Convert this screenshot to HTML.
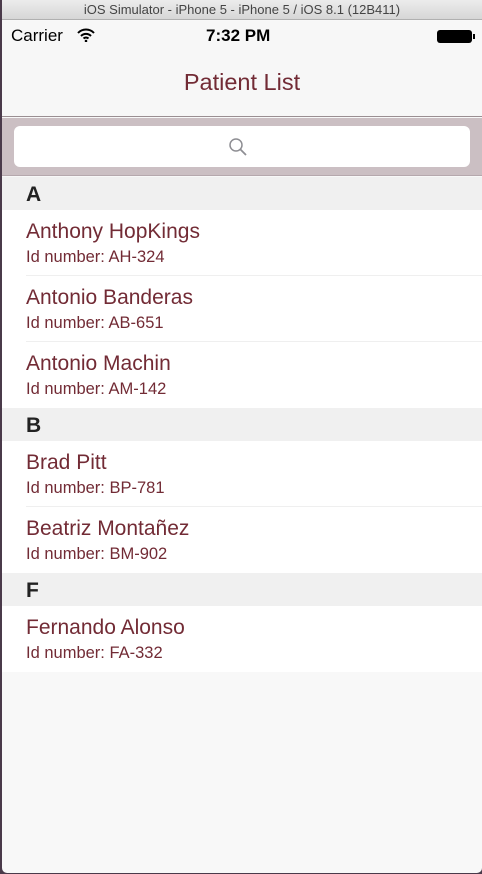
<!DOCTYPE html>
<html><head><style>
*{margin:0;padding:0;box-sizing:border-box}
body{width:482px;height:874px;background:#4a3a4a;position:relative;overflow:hidden;font-family:"Liberation Sans",sans-serif}
.win{position:absolute;left:2px;top:0;width:480px;height:873px;background:#f8f8f8;border-radius:0 0 5px 5px;overflow:hidden}
.tb{height:20px;background:linear-gradient(#ececec,#d6d6d6);border-bottom:1px solid #b0b0b0;text-align:center;font-size:13px;color:#444;line-height:20px}
.sb{position:absolute;top:21px;left:0;width:480px;height:30px;font-size:17px;color:#000}
.nav{position:absolute;top:21px;left:0;width:480px;height:96px;background:#f7f7f7;border-bottom:1px solid #9a8e92}
.title{position:absolute;top:69px;width:480px;text-align:center;font-size:23.5px;color:#722b35}
.search{position:absolute;top:118px;left:0;width:480px;height:58px;background:#cbbfc3;border-bottom:1px solid #b5a8ad}
.field{position:absolute;left:12px;top:8px;width:456px;height:41px;background:#fff;border-radius:6px}
.list{position:absolute;top:177px;left:0;width:480px}
.sec{height:33px;background:#f0f0f0;font-size:21px;font-weight:bold;color:#222;padding-left:24px;line-height:36px}
.row{height:66px;background:#fff;position:relative;color:#722b35}
.row .n{position:absolute;left:24px;top:10px;font-size:21px}
.row .i{position:absolute;left:24px;top:38px;font-size:16.5px}
.row.l::after{content:"";position:absolute;left:24px;right:0;bottom:0;height:1px;background:#efefef}
</style></head><body>
<div class="win">
<div class="tb">iOS Simulator - iPhone 5 - iPhone 5 / iOS 8.1 (12B411)</div>
<div class="nav"></div>
<div class="sb">
<span style="position:absolute;left:9px;top:5px">Carrier</span>
<svg style="position:absolute;left:74px;top:7px" width="20" height="14" viewBox="0 0 20 14"><path d="M2 5a11 11 0 0 1 16 0M5 8a7 7 0 0 1 10 0M7.5 10.5a3.5 3.5 0 0 1 5 0" fill="none" stroke="#000" stroke-width="2"/><circle cx="10" cy="13" r="1.3"/></svg>
<span style="position:absolute;left:204px;top:5px;font-weight:bold">7:32 PM</span>
<div style="position:absolute;left:435px;top:9px;width:35px;height:13px;background:#000;border-radius:3px"></div>
<div style="position:absolute;left:471px;top:13px;width:2px;height:5px;background:#000"></div>
</div>
<div class="title">Patient List</div>
<div class="search"><div class="field">
<svg style="position:absolute;left:214px;top:11px" width="20" height="20" viewBox="0 0 20 20"><circle cx="8" cy="8" r="6" fill="none" stroke="#8e8e93" stroke-width="1.5"/><path d="M12.5 12.5L18 18" stroke="#8e8e93" stroke-width="1.8"/></svg>
</div></div>
<div class="list">
<div class="sec">A</div>
<div class="row l"><div class="n">Anthony HopKings</div><div class="i">Id number: AH-324</div></div>
<div class="row l"><div class="n">Antonio Banderas</div><div class="i">Id number: AB-651</div></div>
<div class="row"><div class="n">Antonio Machin</div><div class="i">Id number: AM-142</div></div>
<div class="sec">B</div>
<div class="row l"><div class="n">Brad Pitt</div><div class="i">Id number: BP-781</div></div>
<div class="row"><div class="n">Beatriz Montañez</div><div class="i">Id number: BM-902</div></div>
<div class="sec">F</div>
<div class="row"><div class="n">Fernando Alonso</div><div class="i">Id number: FA-332</div></div>
</div>
</div>
</body></html>
